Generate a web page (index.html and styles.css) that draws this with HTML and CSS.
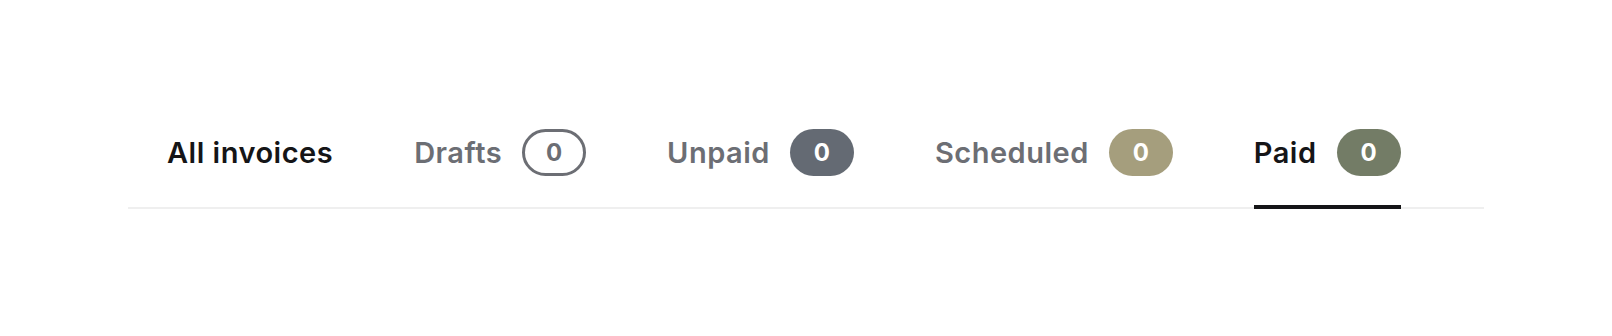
FILE: index.html
```html
<!DOCTYPE html>
<html lang="en">
<head>
  <meta charset="UTF-8">
  <meta name="viewport" content="width=device-width, initial-scale=1.0">
  <title>Invoices</title>
  <link rel="stylesheet" href="styles.css">
</head>
<body>
  <nav class="invoice-tabs">
    <a class="tab plain" href="#">All invoices</a>
    <a class="tab" href="#">Drafts <span class="count outline">0</span></a>
    <a class="tab" href="#">Unpaid <span class="count slate">0</span></a>
    <a class="tab" href="#">Scheduled <span class="count khaki">0</span></a>
    <a class="tab active" href="#">Paid <span class="count olive">0</span></a>
  </nav>
</body>
</html>
```

FILE: styles.css
```css
html, body {
  margin: 0;
  background: #ffffff;
  font-family: Inter, "Noto Sans", sans-serif;
}

.invoice-tabs {
  display: flex;
  align-items: flex-end;
  gap: 81px;
  margin: 129px 128px 0;
  padding-left: 39px;
  border-bottom: 2px solid #efefef;
}

.tab {
  display: flex;
  align-items: center;
  gap: 20px;
  height: 47px;
  padding-bottom: 29px;
  margin-bottom: -2px;
  border-bottom: 4px solid transparent;
  font-size: 29px;
  font-weight: 600;
  color: #6c6e74;
  text-decoration: none;
  letter-spacing: 0.5px;
}

.tab.plain,
.tab.active {
  color: #151517;
}

.tab.active {
  border-bottom-color: #151517;
}

.count {
  display: flex;
  justify-content: center;
  align-items: center;
  box-sizing: border-box;
  width: 64px;
  height: 47px;
  border-radius: 24px;
  font-size: 24px;
  font-weight: 700;
  letter-spacing: 0;
  color: #ffffff;
}

.count.outline { border: 3px solid #6c6e74; color: #6c6e74; background: #ffffff; }
.count.slate { background: #646a73; }
.count.khaki { background: #a59e7d; }
.count.olive { background: #737c66; }
```
